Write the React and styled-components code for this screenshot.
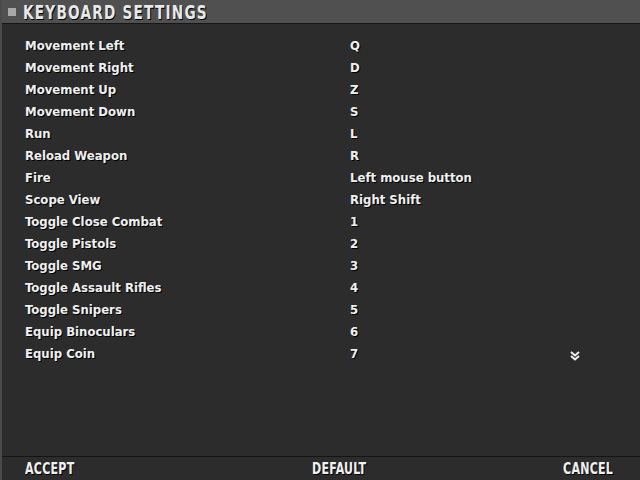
import styled, { createGlobalStyle } from "styled-components";

const GlobalStyle = createGlobalStyle`
    html, body {
        margin: 0;
        padding: 0;
        background: #2c2c2c;
    }
`

const Window = styled.div`
    width: 640px;
    height: 480px;
    display: flex;
    flex-direction: column;
    background: #2c2c2c;
    border-left: 2px solid #4a4a4a;
    box-sizing: border-box;
    font-family: "DejaVu Sans Condensed", "DejaVu Sans", sans-serif;
    font-weight: bold;
    color: #f0f0f0;
    text-shadow: 1px 1px 0 #000;
`

const TitleBar = styled.div`
    height: 23px;
    display: flex;
    align-items: center;
    gap: 7px;
    padding-left: 6px;
    background: #505050;
    border-bottom: 1px solid #161616;
`

const Square = styled.div`
    width: 8px;
    height: 8px;
    background: #a8a8a8;
`

const Title = styled.div`
    font-size: 19px;
    letter-spacing: 1.5px;
    transform: scaleX(0.8);
    transform-origin: left center;
    color: #e8e8e8;
    white-space: nowrap;
`

const Body = styled.div`
    flex: 1;
    display: flex;
    padding: 10px 0 0 23px;
`

const List = styled.div`
    display: flex;
    flex-direction: column;
`

const Row = styled.div`
    display: grid;
    grid-template-columns: 325px 220px;
    height: 22px;
    align-items: center;
    font-size: 13px;
`

const Chevrons = styled.div`
    align-self: flex-start;
    margin-top: 312px;
`

const Footer = styled.div`
    height: 23px;
    display: grid;
    grid-template-columns: 287px 1fr auto;
    align-items: center;
    padding: 0 27px 0 23px;
    border-top: 1px solid #151515;
    font-size: 15px;
    letter-spacing: 0.3px;
`

const FooterBtn = styled.div`
    transform: scaleX(0.82);
    transform-origin: ${p => (p.right ? "right" : "left")} center;
    white-space: nowrap;
`

const bindings = [
    ["Movement Left", "Q"],
    ["Movement Right", "D"],
    ["Movement Up", "Z"],
    ["Movement Down", "S"],
    ["Run", "L"],
    ["Reload Weapon", "R"],
    ["Fire", "Left mouse button"],
    ["Scope View", "Right Shift"],
    ["Toggle Close Combat", "1"],
    ["Toggle Pistols", "2"],
    ["Toggle SMG", "3"],
    ["Toggle Assault Rifles", "4"],
    ["Toggle Snipers", "5"],
    ["Equip Binoculars", "6"],
    ["Equip Coin", "7"],
]

export default function App() {
    return (
        <Window>
            <GlobalStyle />
            <TitleBar>
                <Square />
                <Title>KEYBOARD SETTINGS</Title>
            </TitleBar>
            <Body>
                <List>
                    {bindings.map((one, index) => {
                        return (
                            <Row key={index}>
                                <span>{one[0]}</span>
                                <span>{one[1]}</span>
                            </Row>
                        )
                    })}
                </List>
                <Chevrons>
                    <svg width="10" height="10" viewBox="0 0 10 10">
                        <path d="M1 1 L5 4.5 L9 1 M1 5 L5 8.5 L9 5" stroke="#f0f0f0" strokeWidth="2" fill="none" />
                    </svg>
                </Chevrons>
            </Body>
            <Footer>
                <FooterBtn>ACCEPT</FooterBtn>
                <FooterBtn>DEFAULT</FooterBtn>
                <FooterBtn right>CANCEL</FooterBtn>
            </Footer>
        </Window>
    );
}
